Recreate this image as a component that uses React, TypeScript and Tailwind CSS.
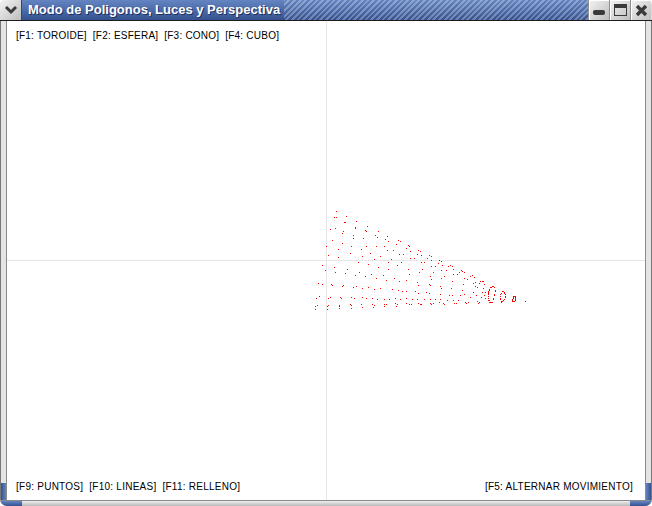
const LEFT_DOTS: number[][] = [
  [78,19],[72,37],[77,37],[109,34],[105,50],[103,52],[139,49],[136,65],[136,68],[170,64],[166,76],[169,79],[203,79],[232,94],[61,72],[75,68],[100,79],[97,84],[130,91],[129,100],[160,100],[196,91],[202,95],[226,103],[235,109],[265,106],[269,109],[295,121],[298,124],[65,106],[95,115],[124,124],[49,124],[85,133],[152,133],[169,124],[199,124],[223,124],[259,118],[289,130],[232,136],[250,136],[268,148],[280,148],[301,139],[325,136],[55,151],[85,157],[121,145],[157,154],[181,145],[193,163],[211,154],[244,163],[301,160],[313,160],[322,148],
  [145,172],[175,178],[205,187],[235,172],[262,181],[274,172],[37,181],[73,187],[46,196],[76,202],[112,193],[106,205],[148,202],[136,211],[184,208],[166,214],[199,220],[220,211],[235,193],[253,220],[268,229],[295,193],[298,208],[328,202],[289,226],[322,232],[325,241],[25,235],[37,238],[64,238],[67,241],[100,241],[97,244],[130,247],[139,244],[157,250],[175,247],[193,253],[211,250],[229,226],[247,253],[265,256],[277,259],[289,259],[316,259],[325,265],[28,274],[19,280],[55,280],[61,277],[91,277],[94,280],[124,277],[133,280],[157,277],[169,280],[187,280],[202,283],[223,283],[238,283],[256,280],[271,283],[289,280],[307,283],[322,283],
  [22,301],[16,304],[16,313],[55,301],[52,304],[52,313],[88,301],[88,304],[88,310],[121,298],[124,301],[124,310],[154,298],[157,307],[187,298],[193,301],[190,307],[223,298],[229,298],[223,304],[256,295],[262,298],[259,304],[289,295],[298,298],[304,298],[325,295],[331,298],
];

const RIGHT_DOTS: number[][] = [
  [0,19],[3,31],[28,31],[34,34],[22,40],[34,46],[3,52],[12,52],[58,46],[55,55],[46,64],[34,64],[7,73],[40,82],[30,94],[32,103],[28,118],[31,121],[19,142],[28,145],[13,163],[29,163],[46,163],[40,175],[34,178],[31,175],[3,178],[58,172],
  // last rings of the torus
  [211,127],[214,127],[217,124],[220,124],[223,127],[226,136],[226,139],[223,148],[223,151],[220,160],[220,163],[211,172],[214,172],[217,172],[205,139],[205,145],[205,154],[208,166],[208,133],[205,160],
  [247,139],[250,139],[253,142],[253,145],[256,148],[256,154],[256,157],[253,163],[250,166],[247,169],[244,172],[244,169],[241,163],[241,160],[241,154],[241,148],[244,145],
  [280,154],[283,154],[286,154],[286,157],[286,160],[286,163],[286,166],[283,169],[280,169],[277,169],[277,166],[277,163],[280,160],[280,157],[316,169],
];

const MID_DOTS: number[][] = [
  [4,4],[7,16],[4,31],[19,31],[25,19],[31,16],[37,19],[40,28],[40,43],[13,49],[4,55],[37,64],[34,85],[28,106],[37,106],[40,121],[43,130],[49,130],[55,121],[10,130],[13,133],[1,79],[4,85],[1,103],[1,118],[22,121],
  [52,43],[58,37],[64,31],[67,34],[73,37],[73,55],[70,73],[67,91],[61,106],[73,103],[76,127],[79,130],[85,127],[91,112],[100,97],[82,58],[91,49],[97,46],[103,52],[106,67],[106,79],
  [109,106],[112,124],[115,130],[118,127],[124,112],[127,97],[130,85],[100,70],[112,82],[118,70],[121,64],[127,64],[130,64],[133,73],[136,97],[133,106],[136,115],
  [145,115],[145,121],[148,127],[145,103],[145,97],[148,91],
];

// canvas origin in the window is (7, 21)
const dots = [
  ...LEFT_DOTS.map(([x, y]) => [Math.round(x / 3) + 310 - 7, Math.round(y / 3) + 205 - 21]),
  ...RIGHT_DOTS.map(([x, y]) => [Math.round(x / 3) + 420 - 7, Math.round(y / 3) + 245 - 21]),
  ...MID_DOTS.map(([x, y]) => [Math.round(x / 3) + 440 - 7, Math.round(y / 3) + 260 - 21]),
];

function WindowButton({ children }: { children: React.ReactNode }) {
  return (
    <div className="w-[21px] h-[20px] flex items-center justify-center bg-gradient-to-br from-[#f4f4f4] to-[#bdbdbd] border-l border-[#8f8f8f] shadow-[inset_1px_1px_0_#ffffff]">
      {children}
    </div>
  );
}

function App() {
  return (
    <div className="w-[652px] h-[506px] bg-white overflow-hidden font-['Liberation_Sans',Arial,sans-serif]">
      <div className="w-full h-full flex flex-col bg-[#dcdcdc] rounded-t-[5px] rounded-b-[7px] overflow-hidden">
        {/* title bar */}
        <div className="h-[20px] flex border-b border-[#1c1c1c] shrink-0 box-content">
          <div className="w-[22px] flex items-center justify-center bg-gradient-to-br from-[#f4f4f4] to-[#bdbdbd] border-r border-[#444444]">
            <svg width="14" height="10" viewBox="0 0 14 10">
              <path d="M2 2 L7 7 L12 2" fill="none" stroke="#3a3a3a" strokeWidth="3" />
            </svg>
          </div>
          <div className="flex-1 flex items-center bg-[repeating-linear-gradient(135deg,rgba(255,255,255,0.28)_0px,rgba(255,255,255,0.28)_2px,rgba(255,255,255,0)_2px,rgba(255,255,255,0)_4px),linear-gradient(#6485c2,#35528f)]">
            <span className="text-[13px] font-bold text-white whitespace-nowrap [text-shadow:1px_1px_0_#1e2f5c] bg-gradient-to-b from-[#6485c2] to-[#35528f] pl-[6px] pr-[4px] h-[20px] leading-[20px]">
              Modo de Poligonos, Luces y Perspectiva
            </span>
          </div>
          <div className="flex pr-[1px]">
            <WindowButton>
              <div className="w-[12px] h-[5px] rounded-[2px] bg-[#3a3a3a] mt-[5px]" />
            </WindowButton>
            <WindowButton>
              <div className="w-[13px] h-[12px] border border-[#3a3a3a] border-t-[4px]" />
            </WindowButton>
            <WindowButton>
              <svg width="13" height="13" viewBox="0 0 13 13">
                <path d="M2 2 L11 11 M11 2 L2 11" stroke="#3a3a3a" strokeWidth="3.4" />
              </svg>
            </WindowButton>
          </div>
        </div>

        {/* client area */}
        <div className="flex-1 flex min-h-0">
          <div className="w-[7px] shrink-0 flex flex-col justify-end bg-[#e4e4e4] border-l border-r border-l-[#777777] border-r-[#8a8a8a]">
            <div className="h-[17px] w-[5px] bg-gradient-to-r from-[#35528f] to-[#6485c2]" />
          </div>
          <div className="relative flex-1 bg-white flex flex-col justify-between px-[9px] pt-[8px] pb-[6px] text-[10px] leading-[14px] text-black">
            <svg className="absolute inset-0" width="638" height="479" shapeRendering="crispEdges">
              <rect x="319" y="0" width="1" height="479" fill="#e6e6e6" />
              <rect x="0" y="239" width="638" height="1" fill="#e6e6e6" />
              {dots.map(([x, y], i) => (
                <rect key={i} x={x} y={y} width="1" height="1" fill="#ff0000" />
              ))}
            </svg>
            <div className="relative flex gap-[6px] whitespace-pre tracking-[0.22px]">
              <span>[F1: TOROIDE]</span>
              <span>[F2: ESFERA]</span>
              <span>[F3: CONO]</span>
              <span>[F4: CUBO]</span>
            </div>
            <div className="relative flex justify-between whitespace-pre tracking-[0.25px] pr-[3px]">
              <div className="flex gap-[6px]">
                <span>[F9: PUNTOS]</span>
                <span>[F10: LINEAS]</span>
                <span>[F11: RELLENO]</span>
              </div>
              <span>[F5: ALTERNAR MOVIMIENTO]</span>
            </div>
          </div>
          <div className="w-[7px] shrink-0 flex flex-col justify-end bg-[#e4e4e4] border-l border-r border-l-[#8a8a8a] border-r-[#777777]">
            <div className="h-[17px] w-[5px] bg-gradient-to-r from-[#6485c2] to-[#35528f]" />
          </div>
        </div>

        {/* bottom border with blue corner grips */}
        <div className="h-[6px] shrink-0 flex border-t border-[#8a8a8a] bg-gradient-to-b from-[#f0f0f0] to-[#b8b8b8]">
          <div className="w-[22px] bg-gradient-to-b from-[#6485c2] to-[#35528f]" />
          <div className="flex-1" />
          <div className="w-[22px] bg-gradient-to-b from-[#6485c2] to-[#35528f]" />
        </div>
      </div>
    </div>
  );
}

export default App;
